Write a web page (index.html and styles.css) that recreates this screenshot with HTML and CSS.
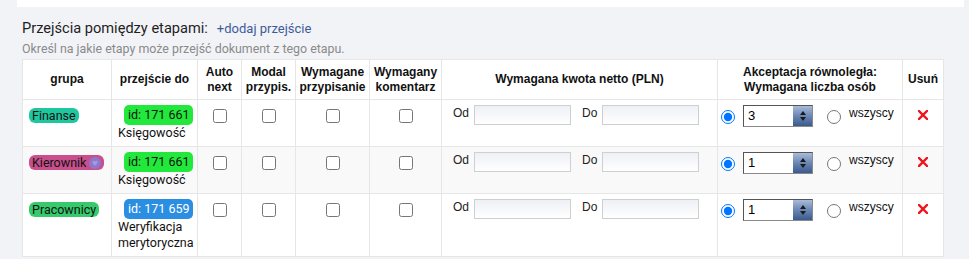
FILE: index.html
```html
<!DOCTYPE html>
<html lang="pl">
<head>
  <meta charset="UTF-8" />
  <title>Przejścia pomiędzy etapami</title>
  <link rel="stylesheet" href="styles.css">
</head>
<body>

  <div class="top-panel"></div>

  <section class="transitions">
    <div class="title-line">
      <h3>Przejścia pomiędzy etapami:</h3>
      <a href="#" class="add-link">+dodaj przejście</a>
    </div>
    <p class="hint">Określ na jakie etapy może przejść dokument z tego etapu.</p>

    <table class="grid">
      <colgroup>
        <col class="c-group"><col class="c-target"><col class="c-auto"><col class="c-modal">
        <col class="c-assign"><col class="c-comment"><col class="c-amount"><col class="c-accept"><col class="c-remove">
      </colgroup>
      <thead>
        <tr>
          <th>grupa</th>
          <th>przejście do</th>
          <th>Auto<br>next</th>
          <th>Modal<br>przypis.</th>
          <th>Wymagane<br>przypisanie</th>
          <th>Wymagany<br>komentarz</th>
          <th>Wymagana kwota netto (PLN)</th>
          <th>Akceptacja równoległa:<br>Wymagana liczba osób</th>
          <th>Usuń</th>
        </tr>
      </thead>
      <tbody>
        <tr class="row-short">
          <td><span class="group group-finanse">Finanse</span></td>
          <td class="target"><span class="stage stage-green">id: 171 661</span><div class="stage-name">Księgowość</div></td>
          <td class="check"><input type="checkbox"></td>
          <td class="check"><input type="checkbox"></td>
          <td class="check"><input type="checkbox"></td>
          <td class="check"><input type="checkbox"></td>
          <td>
            <div class="amount">
              <label>Od</label><input type="text" class="money">
              <label class="to">Do</label><input type="text" class="money">
            </div>
          </td>
          <td>
            <div class="accept">
              <input type="radio" name="a1" checked>
              <div class="spinner"><span class="value">3</span><span class="arrows"><i class="up"></i><i class="down"></i></span></div>
              <input type="radio" name="a1" class="all">
              <span class="all-label">wszyscy</span>
            </div>
          </td>
          <td class="remove"><svg width="10" height="10" viewBox="0 0 10 10"><path d="M1 1 L9 9 M9 1 L1 9" stroke="#f0141e" stroke-width="2.4" stroke-linecap="square"/></svg></td>
        </tr>
        <tr class="row-short striped">
          <td><span class="group group-kierownik">Kierownik <svg class="group-icon" width="12" height="12" viewBox="0 0 12 12"><circle cx="6" cy="6" r="6" fill="#8c78cc"/><path d="M3.4 5.2 C3.4 3.6 5.4 3.4 6 4.6 C6.6 3.4 8.6 3.6 8.6 5.2 C8.6 6.6 6.8 7.8 6 8.8 C5.2 7.8 3.4 6.6 3.4 5.2 Z" fill="#a898dc"/></svg></span></td>
          <td class="target"><span class="stage stage-green">id: 171 661</span><div class="stage-name">Księgowość</div></td>
          <td class="check"><input type="checkbox"></td>
          <td class="check"><input type="checkbox"></td>
          <td class="check"><input type="checkbox"></td>
          <td class="check"><input type="checkbox"></td>
          <td>
            <div class="amount">
              <label>Od</label><input type="text" class="money">
              <label class="to">Do</label><input type="text" class="money">
            </div>
          </td>
          <td>
            <div class="accept">
              <input type="radio" name="a2" checked>
              <div class="spinner"><span class="value">1</span><span class="arrows"><i class="up"></i><i class="down"></i></span></div>
              <input type="radio" name="a2" class="all">
              <span class="all-label">wszyscy</span>
            </div>
          </td>
          <td class="remove"><svg width="10" height="10" viewBox="0 0 10 10"><path d="M1 1 L9 9 M9 1 L1 9" stroke="#f0141e" stroke-width="2.4" stroke-linecap="square"/></svg></td>
        </tr>
        <tr class="row-tall">
          <td><span class="group group-pracownicy">Pracownicy</span></td>
          <td class="target"><span class="stage stage-blue">id: 171 659</span><div class="stage-name">Weryfikacja merytoryczna</div></td>
          <td class="check"><input type="checkbox"></td>
          <td class="check"><input type="checkbox"></td>
          <td class="check"><input type="checkbox"></td>
          <td class="check"><input type="checkbox"></td>
          <td>
            <div class="amount">
              <label>Od</label><input type="text" class="money">
              <label class="to">Do</label><input type="text" class="money">
            </div>
          </td>
          <td>
            <div class="accept">
              <input type="radio" name="a3" checked>
              <div class="spinner"><span class="value">1</span><span class="arrows"><i class="up"></i><i class="down"></i></span></div>
              <input type="radio" name="a3" class="all">
              <span class="all-label">wszyscy</span>
            </div>
          </td>
          <td class="remove"><svg width="10" height="10" viewBox="0 0 10 10"><path d="M1 1 L9 9 M9 1 L1 9" stroke="#f0141e" stroke-width="2.4" stroke-linecap="square"/></svg></td>
        </tr>
      </tbody>
    </table>
  </section>

</body>
</html>
```

FILE: styles.css
```css
html, body {
  margin: 0;
  padding: 0;
  background: #f2f3f7;
  font-family: Roboto, "Liberation Sans", sans-serif;
  color: #222;
}

.top-panel {
  height: 7px;
  margin: 0 5px 0 17px;
  background: #fff;
}

.transitions {
  padding: 11px 0 0 22px;
}

.title-line {
  display: flex;
  align-items: baseline;
  gap: 9px;
  height: 20px;
}

.title-line h3 {
  margin: 0;
  font-size: 14.6px;
  font-weight: 400;
  line-height: 20px;
  color: #1e1e1e;
}

.add-link {
  font-size: 13px;
  color: #3d5b9b;
  text-decoration: none;
}

.hint {
  margin: 3px 0 0 0;
  font-size: 12.4px;
  line-height: 16px;
  color: #8a8a8a;
}

.grid {
  margin-top: 2px;
  width: 921px;
  table-layout: fixed;
  border-collapse: collapse;
  background: #fff;
}

.c-group { width: 89px; }
.c-target { width: 86px; }
.c-auto { width: 44px; }
.c-modal { width: 54px; }
.c-assign { width: 74px; }
.c-comment { width: 72px; }
.c-amount { width: 276px; }
.c-accept { width: 185px; }
.c-remove { width: 41px; }

.grid th,
.grid td {
  border: 1px solid #e6e6e6;
  padding: 5px 6px;
  vertical-align: top;
}

.grid th {
  height: 31px;
  padding: 4px 2px;
  vertical-align: middle;
  font-family: "Liberation Sans", Arial, sans-serif;
  font-size: 12px;
  font-weight: 700;
  line-height: 15px;
  text-align: center;
  color: #111;
}

.grid tr.striped td {
  background: #f9f9f9;
}

.row-short td { height: 36px; }
.row-tall td { height: 50px; }

.group {
  display: inline-flex;
  align-items: center;
  gap: 3px;
  height: 15px;
  padding: 0 3px;
  border-radius: 6px;
  font-size: 12.5px;
  line-height: 15px;
  color: #111;
  white-space: nowrap;
}

.group-finanse { background: #1fc79e; }
.group-kierownik { background: #c94f8c; }
.group-pracownicy { background: #35cb6d; }

.group-icon { display: block; }

.grid td.target {
  padding-right: 2px;
  font-size: 12.5px;
  line-height: 16px;
}

.stage {
  display: inline-block;
  margin-left: 6px;
  padding: 0 4px;
  height: 20px;
  line-height: 20px;
  border-radius: 5px;
  font-size: 12.5px;
  white-space: nowrap;
}

.stage-green { background: #22e83c; color: #111; }
.stage-blue { background: #2a8ee2; color: #fff; }

.stage-name {
  color: #111;
}

.check {
  text-align: center;
}

.check input {
  margin: 4px 0 0 0;
  width: 14px;
  height: 14px;
}

.amount {
  display: flex;
  align-items: flex-start;
  padding-left: 5px;
  font-family: "Liberation Sans", Arial, sans-serif;
  font-size: 12px;
}

.amount label {
  line-height: 17px;
  margin-right: 5px;
}

.amount label.to {
  margin-left: 11px;
}

.money {
  box-sizing: border-box;
  width: 97px;
  height: 20px;
  margin: 0;
  border: 1px solid #cfcfcf;
  background: linear-gradient(#edf0f5, #fff);
  font-size: 12px;
}

.accept {
  display: flex;
  align-items: flex-start;
  margin-left: -3px;
  font-family: "Liberation Sans", Arial, sans-serif;
  font-size: 12px;
}

.accept input[type=radio] {
  width: 14px;
  height: 14px;
  margin: 5px 8px 0 0;
}

.accept input.all {
  margin-left: 14px;
}

.spinner {
  box-sizing: border-box;
  display: flex;
  width: 70px;
  height: 22px;
  border: 1px solid #8a8a8a;
  border-top-color: #555;
  border-left-color: #555;
  background: #fff;
}

.spinner .value {
  flex: 1;
  padding-left: 4px;
  font-size: 13px;
  line-height: 20px;
  color: #000;
}

.spinner .arrows {
  width: 19px;
  display: flex;
  flex-direction: column;
  align-items: center;
  justify-content: center;
  gap: 2px;
  background: linear-gradient(#a9bcd9, #6a86b3 50%, #3a5a8e);
}

.arrows i {
  display: block;
  width: 0;
  height: 0;
  border-left: 3px solid transparent;
  border-right: 3px solid transparent;
}

.arrows .up { border-bottom: 4px solid #1a1a1a; }
.arrows .down { border-top: 4px solid #1a1a1a; }

.all-label {
  line-height: 16px;
  color: #111;
}

.remove {
  text-align: center;
}

.remove svg {
  margin-top: 5px;
}
```
